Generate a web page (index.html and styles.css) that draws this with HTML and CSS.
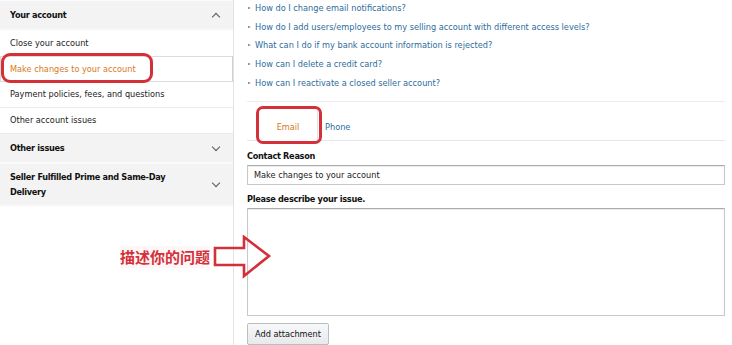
FILE: index.html
```html
<!DOCTYPE html>
<html lang="en">

<head>
    <meta charset="UTF-8">
    <meta name="viewport" content="width=device-width, initial-scale=1.0">
    <title>Contact seller support</title>
    <link rel="stylesheet" href="styles.css">
</head>

<body>
    <div class="page">
        <!-- 左側分類選單 -->
        <aside class="sidebar">
            <div class="group-head open">
                <span>Your account</span>
                <span class="chev up"></span>
            </div>
            <div class="item">Close your account</div>
            <div class="item selected">Make changes to your account</div>
            <div class="item">Payment policies, fees, and questions</div>
            <div class="item">Other account issues</div>
            <div class="group-head">
                <span>Other issues</span>
                <span class="chev"></span>
            </div>
            <div class="group-head tall">
                <span>Seller Fulfilled Prime and Same-Day Delivery</span>
                <span class="chev"></span>
            </div>
        </aside>

        <!-- 右側問題與表單 -->
        <main class="content">
            <ul class="faq">
                <li><a href="#">How do I change email notifications?</a></li>
                <li><a href="#">How do I add users/employees to my selling account with different access levels?</a></li>
                <li><a href="#">What can I do if my bank account information is rejected?</a></li>
                <li><a href="#">How can I delete a credit card?</a></li>
                <li><a href="#">How can I reactivate a closed seller account?</a></li>
            </ul>

            <div class="tabs">
                <div class="tab active">Email</div>
                <div class="tab">Phone</div>
            </div>

            <form class="form">
                <label class="label">Contact Reason</label>
                <div class="input">Make changes to your account</div>
                <label class="label">Please describe your issue.</label>
                <div class="textarea"></div>
                <button type="button" class="attach">Add attachment</button>
            </form>
        </main>
    </div>

    <!-- 標註 -->
    <div class="mark mark-item"></div>
    <div class="mark mark-tab"></div>
    <div class="note">描述你的问题</div>
    <svg class="arrow" width="60" height="44" viewBox="0 0 60 44">
        <path d="M2 13 L31 13 L31 2 L56 21 L31 41 L31 30 L2 30 Z" fill="none" stroke="#d3303a" stroke-width="2.6"
            stroke-linejoin="miter" />
    </svg>
</body>

</html>
```

FILE: styles.css
```css
html,
body {
    margin: 0;
    height: 100%;
}

body {
    font-family: "DejaVu Sans", Verdana, sans-serif;
    font-size: 8.2px;
    color: #222;
    background: #fff;
    overflow: hidden;
    position: relative;
}

.page {
    display: flex;
    height: 100%;
}

/* sidebar */
.sidebar {
    width: 233px;
    flex: none;
    border-right: 1px solid #e3e3e3;
}

.group-head {
    display: flex;
    align-items: center;
    justify-content: space-between;
    height: 28px;
    padding: 0 14px 0 10px;
    background: #f3f3f3;
    border-bottom: 2px solid #fafafa;
    font-weight: bold;
    letter-spacing: -0.3px;
    color: #111;
}

.group-head.open {
    height: 28px;
    border-top: 1px solid #fafafa;
}

.group-head.tall {
    height: 41px;
    line-height: 15px;
}

.group-head.tall span:first-child {
    width: 175px;
}

.chev {
    width: 5px;
    height: 5px;
    border-right: 1.6px solid #555;
    border-bottom: 1.6px solid #555;
    transform: rotate(45deg);
    margin-top: -3px;
}

.chev.up {
    transform: rotate(-135deg);
    margin-top: 3px;
}

.item {
    height: 25px;
    line-height: 25px;
    padding-left: 10px;
    border-bottom: 1px solid #ececec;
    color: #222;
}

.item.selected {
    color: #d9791a;
    border: 1px solid #dcdcdc;
    border-right-color: #cfcfcf;
    height: 24px;
    line-height: 24px;
    padding-left: 9px;
    margin-top: -1px;
}

/* content */
.content {
    flex: 1;
    padding: 0 7px 0 13px;
}

.faq {
    list-style: none;
    margin: -1px 0 0;
    padding: 0 0 8px;
    border-bottom: 1px solid #ececec;
}

.faq li {
    line-height: 18.7px;
    padding-left: 8px;
    position: relative;
}

.faq li:before {
    content: '';
    position: absolute;
    left: 1px;
    top: 8px;
    border-left: 3px solid #777;
    border-top: 1.5px solid transparent;
    border-bottom: 1.5px solid transparent;
}

.faq a {
    color: #2d6c9c;
    text-decoration: none;
}

.tabs {
    display: flex;
    align-items: flex-end;
    height: 38px;
    padding-left: 11px;
    border-bottom: 1px solid #e6e6e6;
}

.tab {
    width: 58px;
    height: 32px;
    line-height: 36px;
    text-align: center;
    color: #2d6c9c;
    margin-bottom: -1px;
}

.tab.active {
    color: #d9791a;
    background: #fff;
    border: 1px solid #e2e2e2;
    border-bottom-color: #fff;
    height: 31px;
}

.tab:not(.active) {
    width: auto;
    padding-left: 7px;
}

.form {
    display: flex;
    flex-direction: column;
    padding-top: 9px;
}

.label {
    font-weight: bold;
    letter-spacing: -0.3px;
    color: #111;
    line-height: 12px;
    margin-bottom: 3px;
}

.input {
    height: 18px;
    line-height: 18px;
    padding-left: 6px;
    border: 1px solid #c9c9c9;
    border-top-color: #aaa;
    box-shadow: inset 0 1px 1px rgba(0, 0, 0, 0.08);
    margin-bottom: 8px;
}

.textarea {
    height: 106px;
    border: 1px solid #c9c9c9;
    border-top-color: #aaa;
    box-shadow: inset 0 1px 1px rgba(0, 0, 0, 0.08);
    margin-bottom: 7px;
}

.attach {
    align-self: flex-start;
    font-family: inherit;
    font-size: 8.2px;
    color: #111;
    height: 22px;
    padding: 0 7px;
    border: 1px solid #bdbdbd;
    border-radius: 2px;
    background: linear-gradient(#f7f8fa, #e7e9ec);
}

/* annotations */
.mark {
    position: absolute;
    border: 3px solid #d3303a;
    border-radius: 9px;
}

.mark-item {
    left: 1px;
    top: 53px;
    width: 146px;
    height: 24px;
}

.mark-tab {
    left: 256px;
    top: 106px;
    width: 60px;
    height: 32px;
    border-radius: 7px;
}

.note {
    position: absolute;
    left: 120px;
    top: 246px;
    font-family: "Noto Sans CJK SC", sans-serif;
    font-weight: bold;
    font-size: 15px;
    line-height: 22px;
    color: #d3303a;
    background: rgba(255, 240, 240, 0.5);
}

.arrow {
    position: absolute;
    left: 213px;
    top: 235px;
}
```
